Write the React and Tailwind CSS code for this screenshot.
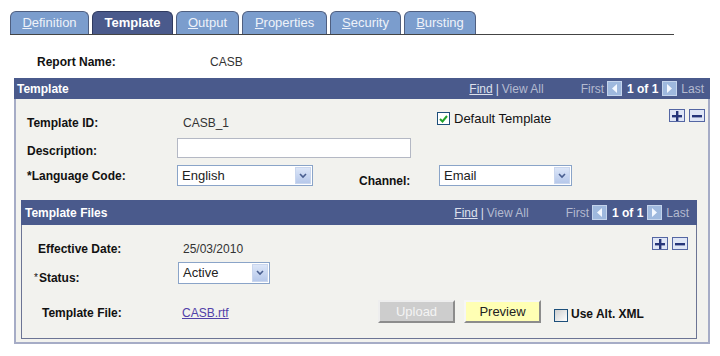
import React from 'react';

const font = { fontFamily: '"Liberation Sans", Arial, sans-serif' };

const tabs = [
  { label: 'Definition', w: 'w-[79px]' },
  { label: 'Template', w: 'w-[81px]', active: true },
  { label: 'Output', w: 'w-[63px]' },
  { label: 'Properties', w: 'w-[85px]' },
  { label: 'Security', w: 'w-[71px]' },
  { label: 'Bursting', w: 'w-[72px]' },
];

const Tab = ({ label, w, active }) => (
  <div
    className={`${w} h-[23px] flex items-center justify-center rounded-t-[6px] border border-b-0 text-[13px] ${
      active
        ? 'bg-[#4a5a8c] border-[#2f3a60] text-white font-bold'
        : 'bg-[#7b9dcd] border-[#4f5f80] text-[#eef2fa]'
    }`}
  >
    {active ? label : (
      <span>
        <span className="underline">{label[0]}</span>
        {label.slice(1)}
      </span>
    )}
  </div>
);

const NavArrow = ({ dir }) => (
  <span className="inline-flex items-center justify-center w-[15px] h-[15px] bg-[#9fb9de] border border-[#c4d4ec]">
    <svg width="7" height="9" viewBox="0 0 7 9">
      {dir === 'left' ? (
        <polygon points="6,0 6,9 1,4.5" fill="#f4f8ff" />
      ) : (
        <polygon points="1,0 1,9 6,4.5" fill="#f4f8ff" />
      )}
    </svg>
  </span>
);

const HeaderNav = () => (
  <div className="flex items-center text-[12px] text-[#b4bad0]">
    <span className="text-[#dde1ec] underline">Find</span>
    <span className="ml-[3px] text-[#dde1ec]">|</span>
    <span className="ml-[3px]">View All</span>
    <span className="ml-[37px]">First</span>
    <span className="ml-[3px]"><NavArrow dir="left" /></span>
    <span className="ml-[5px] text-white font-bold">1 of 1</span>
    <span className="ml-[4px]"><NavArrow dir="right" /></span>
    <span className="ml-[4px]">Last</span>
  </div>
);

const PlusMinus = () => (
  <div className="flex gap-[4px]">
    <span className="w-[16px] h-[13px] flex items-center justify-center bg-[#dfe6f6] border border-[#5466a3]">
      <svg width="10" height="10" viewBox="0 0 10 10">
        <rect x="4" y="0" width="2.4" height="10" fill="#26357a" />
        <rect x="0" y="4" width="10" height="2.4" fill="#26357a" />
      </svg>
    </span>
    <span className="w-[16px] h-[13px] flex items-center justify-center bg-[#dfe6f6] border border-[#5466a3]">
      <svg width="10" height="10" viewBox="0 0 10 10">
        <rect x="0" y="4" width="10" height="2.4" fill="#26357a" />
      </svg>
    </span>
  </div>
);

const Select = ({ value, w, h = 'h-[21px]' }) => (
  <div className={`${w} ${h} flex items-stretch bg-white border border-[#8aa4c8] p-[1px]`}>
    <span className="flex-1 pl-[3px] flex items-center text-[13px] text-[#222]">{value}</span>
    <span className="w-[16px] flex items-center justify-center bg-gradient-to-b from-[#dce6f8] to-[#b6c8ea] border border-[#c9d6ee]">
      <svg width="8" height="6" viewBox="0 0 8 6">
        <polyline points="1,1 4,4 7,1" fill="none" stroke="#4a5f90" strokeWidth="1.6" />
      </svg>
    </span>
  </div>
);

const Label = ({ children, className = '' }) => (
  <span className={`font-bold text-[12px] text-[#111] ${className}`}>{children}</span>
);

export default function App() {
  return (
    <div className="w-[720px] h-[356px] bg-white overflow-hidden" style={font}>
      {/* tabs */}
      <div className="pt-[11px] pl-[10px]">
        <div className="w-[664px] flex items-end gap-[3px] border-b border-[#444]">
          {tabs.map((t) => (
            <Tab key={t.label} {...t} />
          ))}
        </div>
      </div>

      {/* report name */}
      <div className="mt-[18px] h-[18px] pl-[37px] flex items-center">
        <Label className="w-[173px]">Report Name:</Label>
        <span className="text-[12px] text-[#333]">CASB</span>
      </div>

      {/* outer panel */}
      <div className="mt-[7px] ml-[14px] w-[696px]">
        <div className="h-[21px] bg-[#4a5a8c] flex items-center justify-between pl-[3px] pr-[6px]">
          <span className="text-white font-bold text-[12px]">Template</span>
          <HeaderNav />
        </div>
        <div className="h-[245px] bg-[#f2f2ee] border-x-[2px] border-b-[2px] border-[#a6acc6] pt-[10px]">
          <div className="h-[27px] flex items-center pl-[11px] pr-[3px]">
            <Label className="w-[156px]">Template ID:</Label>
            <span className="w-[254px] text-[12px] text-[#333]">CASB_1</span>
            <div className="flex-1 self-start flex items-center">
              <span className="w-[13px] h-[13px] bg-white border border-[#1d4f7a] flex items-center justify-center">
                <svg width="9" height="8" viewBox="0 0 9 8">
                  <polyline points="1,4 3.5,6.5 8,1" fill="none" stroke="#21a32b" strokeWidth="2" />
                </svg>
              </span>
              <span className="ml-[4px] text-[13px] text-[#111]">Default Template</span>
            </div>
            <div className="self-start">
              <PlusMinus />
            </div>
          </div>

          <div className="h-[24px] flex items-center pl-[11px]">
            <Label className="w-[150px] mt-[6px]">Description:</Label>
            <div className="w-[234px] h-[20px] bg-white border border-[#b4b8c4]" />
          </div>

          <div className="h-[31px] flex items-center pl-[11px]">
            <Label className="w-[150px]">*Language Code:</Label>
            <Select value="English" w="w-[136px]" />
            <Label className="ml-[46px] w-[80px] mt-[10px]">Channel:</Label>
            <Select value="Email" w="w-[133px]" />
          </div>

          {/* inner panel */}
          <div className="mt-[9px] ml-[5px] w-[676px]">
            <div className="h-[25px] bg-[#4a5a8c] flex items-center justify-between pl-[4px] pr-[8px]">
              <span className="text-white font-bold text-[12px]">Template Files</span>
              <HeaderNav />
            </div>
            <div className="h-[114px] border-x border-b border-[#6c7494] pt-[14px]">
              <div className="h-[20px] flex items-center pl-[16px] pr-[8px]">
                <Label className="w-[145px]">Effective Date:</Label>
                <span className="flex-1 text-[12px] text-[#333]">25/03/2010</span>
                <div className="self-start -mt-[2px]">
                  <PlusMinus />
                </div>
              </div>
              <div className="h-[28px] flex items-center pl-[12px]">
                <span className="w-[144px] mt-[10px] flex items-center">
                  <span className="text-[10px] text-[#111] mr-[1px] -mt-[2px]">*</span>
                  <Label>Status:</Label>
                </span>
                <Select value="Active" w="w-[92px]" h="h-[22px]" />
              </div>
              <div className="h-[36px] flex items-end pl-[20px]">
                <Label className="w-[140px] mb-[1px]">Template File:</Label>
                <span className="w-[196px] mb-[1px] text-[12px] text-[#5140a8] underline">CASB.rtf</span>
                <button className="w-[77px] h-[23px] bg-[#cdcdcd] border-[2px] border-t-[#eeeeee] border-l-[#eeeeee] border-r-[#8c8c8c] border-b-[#8c8c8c] text-[13px] text-[#f4f4f4]">
                  Upload
                </button>
                <button className="ml-[9px] w-[77px] h-[23px] bg-[#ffffb4] border-[2px] border-t-[#f6f6f6] border-l-[#f6f6f6] border-r-[#8c8c8c] border-b-[#8c8c8c] text-[13px] text-[#222]">
                  Preview
                </button>
                <span className="ml-[13px] mb-[1px] w-[14px] h-[13px] border border-[#1d4f7a] bg-gradient-to-br from-[#cfcfcf] to-[#ffffff]" />
                <Label className="ml-[3px]">Use Alt. XML</Label>
              </div>
            </div>
          </div>
        </div>
      </div>
    </div>
  );
}
